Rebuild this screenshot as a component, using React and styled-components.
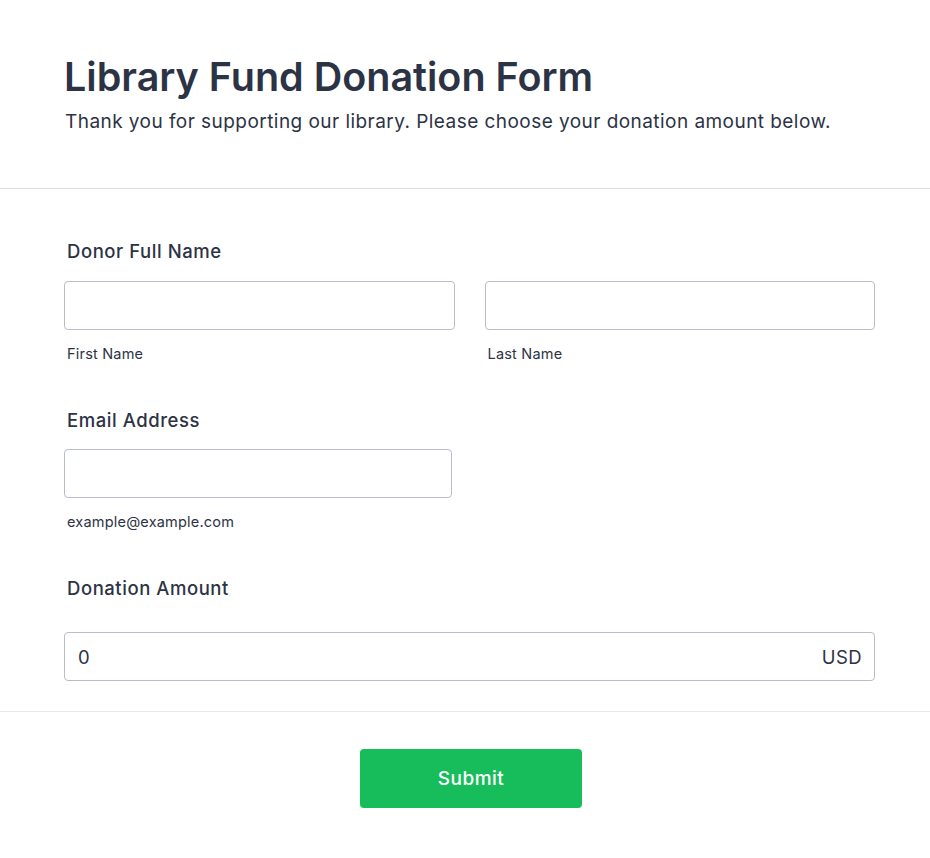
import styled, { createGlobalStyle } from 'styled-components';

const GlobalStyle = createGlobalStyle`
  body {
    margin: 0;
    background: #fff;
    font-family: Inter, "Noto Sans", sans-serif;
    color: #2c3345;
  }
  * { box-sizing: border-box; }
`;

const Page = styled.div`
  width: 930px;
  min-height: 858px;
  background: #fff;
`;

const Header = styled.header`
  padding: 52px 55px 52px 64px;
  border-bottom: 1px solid #dadde8;

  h1 {
    margin: 0;
    font-size: 39.5px;
    font-weight: 600;
    line-height: 50px;
  }
  p {
    margin: 6px 0 0 1px;
    font-size: 19px;
    letter-spacing: 0.45px;
    line-height: 28px;
  }
`;

const Body = styled.div`
  padding: 49px 55px 30px 64px;
  display: flex;
  flex-direction: column;
  gap: 43px;
  border-bottom: 1px solid #e6e8ef;
`;

const Field = styled.div`
  display: flex;
  flex-direction: column;
`;

const Label = styled.label`
  padding-left: 3px;
  font-size: 18.5px;
  font-weight: 500;
  letter-spacing: 0.55px;
  line-height: 26px;
  margin-bottom: ${({ gap }) => gap || 17}px;
`;

const Row = styled.div`
  display: grid;
  grid-template-columns: ${({ cols }) => cols || '1fr 1fr'};
  column-gap: 30px;
`;

const Col = styled.div`
  display: flex;
  flex-direction: column;
`;

const Input = styled.div`
  height: 49px;
  border: 1px solid #b8bdc9;
  border-radius: 4px;
  background: #fff;
  display: flex;
  align-items: center;
  justify-content: space-between;
  padding: 0 12px 0 13px;
  font-size: 18.5px;
  letter-spacing: 0.4px;
  color: #2c3345;
`;

const SubLabel = styled.span`
  padding-left: 3px;
  margin-top: 14px;
  font-size: 14.5px;
  letter-spacing: 0.2px;
  line-height: 20px;
`;

const Footer = styled.div`
  display: flex;
  justify-content: center;
  padding: 37px 55px 0 67px;
`;

const Submit = styled.button`
  width: 222px;
  height: 59px;
  border: none;
  border-radius: 4px;
  background: #18bd5b;
  color: #fff;
  font-family: inherit;
  font-size: 19px;
  letter-spacing: 0.5px;
  font-weight: 500;
  cursor: pointer;
`;

export default function App() {
  return (
    <Page>
      <GlobalStyle />
      <Header>
        <h1>Library Fund Donation Form</h1>
        <p>Thank you for supporting our library. Please choose your donation amount below.</p>
      </Header>
      <Body>
        <Field>
          <Label>Donor Full Name</Label>
          <Row>
            <Col>
              <Input />
              <SubLabel>First Name</SubLabel>
            </Col>
            <Col>
              <Input />
              <SubLabel>Last Name</SubLabel>
            </Col>
          </Row>
        </Field>
        <Field>
          <Label gap={16}>Email Address</Label>
          <Row cols="388px 1fr">
            <Col>
              <Input />
              <SubLabel>example@example.com</SubLabel>
            </Col>
          </Row>
        </Field>
        <Field>
          <Label gap={31}>Donation Amount</Label>
          <Input>
            <span>0</span>
            <span>USD</span>
          </Input>
        </Field>
      </Body>
      <Footer>
        <Submit>Submit</Submit>
      </Footer>
    </Page>
  );
}
